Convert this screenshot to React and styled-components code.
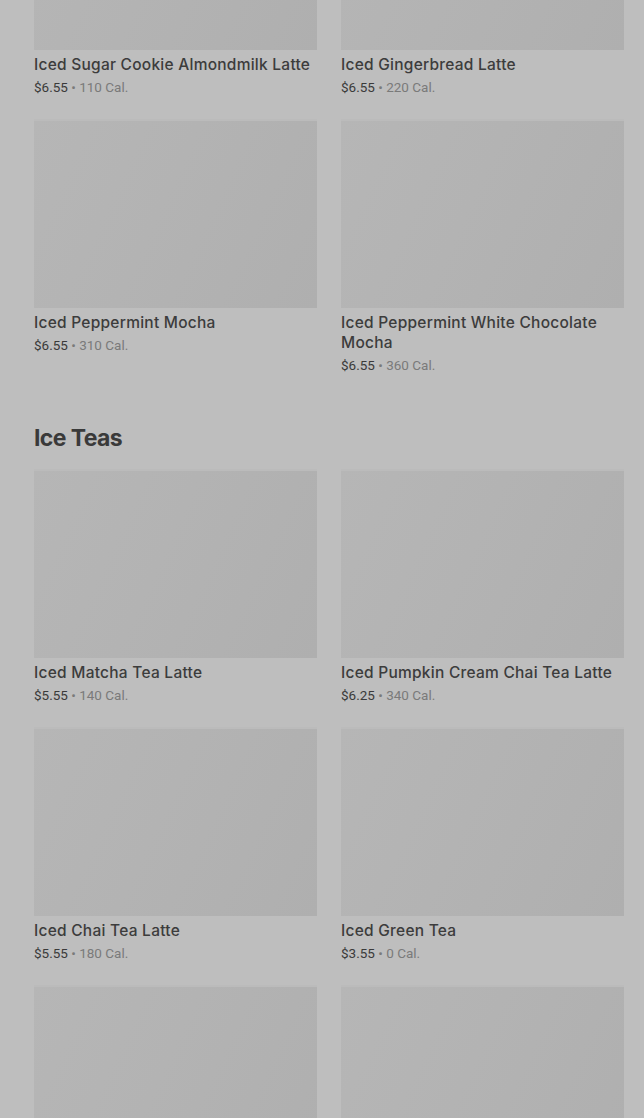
import React from "react"
import styled, { createGlobalStyle } from "styled-components"

const GlobalStyle = createGlobalStyle`
  html, body {
    margin: 0;
    padding: 0;
    background: #bebebe;
    font-family: Inter, Roboto, "Liberation Sans", sans-serif;
    overflow: hidden;
  }
`

const Page = styled.div`
  width: 644px;
  height: 1118px;
  overflow: hidden;
  background: #bebebe;
`

// the page is scrolled: the first row's pictures start above the top edge
const Content = styled.div`
  margin-top: -137px;
  padding: 0 20px 0 34px;
`

const Section = styled.section`
  margin-bottom: 49px;
`

const SectionTitle = styled.h2`
  margin: 0 0 19px;
  font-size: 23px;
  line-height: 28px;
  font-weight: 700;
  color: #3a3a3a;
  letter-spacing: -0.6px;
`

const Grid = styled.div`
  display: grid;
  grid-template-columns: 283px 283px;
  column-gap: 24px;
  row-gap: 24px;
`

const Card = styled.div`
  display: flex;
  flex-direction: column;
`

const Thumb = styled.div`
  height: 187px;
  background: linear-gradient(115deg, #b6b6b6 0%, #b3b3b3 45%, #afafaf 100%);
  box-shadow: 0 -2px 0 #bbbbbb;
`

const Name = styled.div`
  margin-top: 5px;
  font-size: 15.5px;
  line-height: 20px;
  font-weight: 500;
  color: #3c3c3c;
  letter-spacing: 0.25px;
`

const Meta = styled.div`
  margin-top: 2px;
  font-family: Roboto, "Liberation Sans", sans-serif;
  font-size: 13.5px;
  line-height: 20px;
  color: #7a7a7a;
`

const Price = styled.span`
  color: #3a3a3a;
`

const sections = [
  {
    title: null,
    items: [
      { name: "Iced Sugar Cookie Almondmilk Latte", price: "$6.55", cal: 110 },
      { name: "Iced Gingerbread Latte", price: "$6.55", cal: 220 },
      { name: "Iced Peppermint Mocha", price: "$6.55", cal: 310 },
      { name: "Iced Peppermint White Chocolate Mocha", price: "$6.55", cal: 360 },
    ],
  },
  {
    title: "Ice Teas",
    items: [
      { name: "Iced Matcha Tea Latte", price: "$5.55", cal: 140 },
      { name: "Iced Pumpkin Cream Chai Tea Latte", price: "$6.25", cal: 340 },
      { name: "Iced Chai Tea Latte", price: "$5.55", cal: 180 },
      { name: "Iced Green Tea", price: "$3.55", cal: 0 },
      // next row is only partly scrolled into view, its labels sit below the fold
      { name: null },
      { name: null },
    ],
  },
]

const MenuCard = ({ item }) => (
  <Card>
    <Thumb />
    {item.name && (
      <>
        <Name>{item.name}</Name>
        <Meta>
          <Price>{item.price}</Price> • {item.cal} Cal.
        </Meta>
      </>
    )}
  </Card>
)

export default function App() {
  return (
    <Page>
      <GlobalStyle />
      <Content>
        {sections.map((section, i) => (
          <Section key={i}>
            {section.title && <SectionTitle>{section.title}</SectionTitle>}
            <Grid>
              {section.items.map((item, j) => (
                <MenuCard key={j} item={item} />
              ))}
            </Grid>
          </Section>
        ))}
      </Content>
    </Page>
  )
}
